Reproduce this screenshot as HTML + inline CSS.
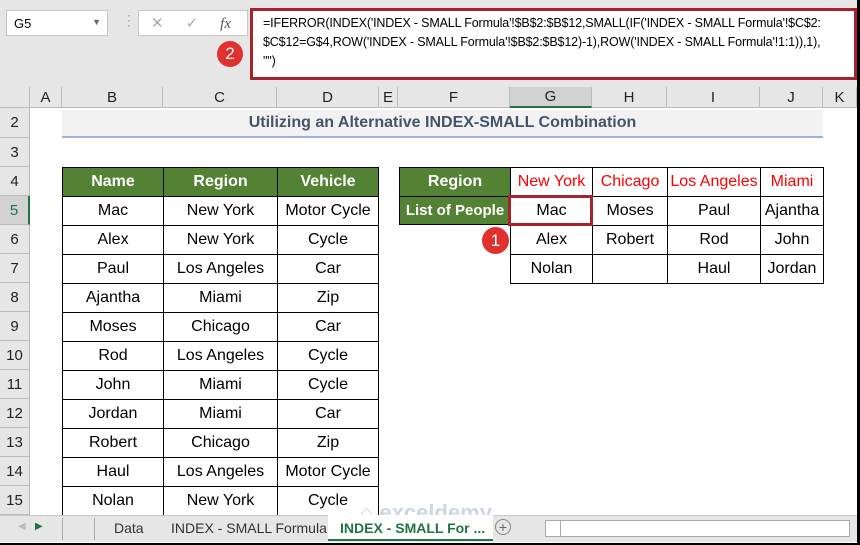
<!DOCTYPE html><html><head><style>
body{margin:0;width:860px;height:545px;overflow:hidden;background:#000;font-family:"Liberation Sans",sans-serif;position:relative}
.a{position:absolute;box-sizing:border-box}
.c{position:absolute;box-sizing:border-box;display:flex;align-items:center;justify-content:center;font-size:16px;color:#000}
.hd{position:absolute;box-sizing:border-box;display:flex;align-items:center;justify-content:center;font-size:15px;color:#222;background:#e6e6e6;border-right:1px solid #bbb;border-bottom:1px solid #bbb}
.g{background:#548235;color:#fff;font-weight:bold}
.r{color:#f00}
.bt{border:1px solid #000}
</style></head><body>
<div class="a" style="left:0;top:0;width:857px;height:543px;background:#fff"></div>
<div class="a" style="left:0;top:0;width:857px;height:87px;background:#e6e6e6"></div>
<div class="a" style="left:6px;top:10px;width:102px;height:26px;background:#fff;border:1px solid #c6c6c6;font-size:13px;padding:5px 0 0 7px">G5<span style="position:absolute;right:6px;top:6px;font-size:9px;color:#666">▼</span></div>
<div class="a" style="left:122px;top:12px;color:#aaa;font-size:14px">⋮</div>
<div class="a" style="left:138px;top:10px;width:110px;height:26px;background:#fff;border:1px solid #c6c6c6;font-size:15px;color:#aaa;padding-top:3px"><span style="margin-left:12px">✕</span><span style="margin-left:22px">✓</span><span style="margin-left:22px;font-family:'Liberation Serif';font-style:italic;color:#555">fx</span></div>
<div class="a" style="left:250px;top:8px;width:607px;height:72px;background:#fff;border:3px solid #a5232a;font-size:12.5px;letter-spacing:-0.15px;line-height:19px;padding:3px 0 0 10px;white-space:pre;overflow:hidden">=IFERROR(INDEX('INDEX - SMALL Formula'!$B$2:$B$12,SMALL(IF('INDEX - SMALL Formula'!$C$2:
$C$12=G$4,ROW('INDEX - SMALL Formula'!$B$2:$B$12)-1),ROW('INDEX - SMALL Formula'!1:1)),1),
"")</div>
<div class="a" style="left:217px;top:41px;width:26px;height:26px;border-radius:50%;background:#e0312f;color:#fff;font-size:17px;text-align:center;line-height:26px">2</div>
<div class="hd" style="left:0;top:87px;width:30px;height:21px"></div>
<div class="hd" style="left:30px;top:87px;width:32px;height:21px">A</div>
<div class="hd" style="left:62px;top:87px;width:101px;height:21px">B</div>
<div class="hd" style="left:163px;top:87px;width:114px;height:21px">C</div>
<div class="hd" style="left:277px;top:87px;width:102px;height:21px">D</div>
<div class="hd" style="left:379px;top:87px;width:19px;height:21px">E</div>
<div class="hd" style="left:398px;top:87px;width:112px;height:21px">F</div>
<div class="hd" style="left:510px;top:87px;width:82px;height:21px;background:#d2d2d2;border-bottom:2px solid #217346">G</div>
<div class="hd" style="left:592px;top:87px;width:75px;height:21px">H</div>
<div class="hd" style="left:667px;top:87px;width:93px;height:21px">I</div>
<div class="hd" style="left:760px;top:87px;width:63px;height:21px">J</div>
<div class="hd" style="left:823px;top:87px;width:34px;height:21px">K</div>
<div class="hd" style="left:0;top:108px;width:30px;height:30px">2</div>
<div class="hd" style="left:0;top:138px;width:30px;height:29px">3</div>
<div class="hd" style="left:0;top:167px;width:30px;height:29px">4</div>
<div class="hd" style="left:0;top:196px;width:30px;height:29px;background:#d2d2d2;color:#217346;border-right:2px solid #217346">5</div>
<div class="hd" style="left:0;top:225px;width:30px;height:29px">6</div>
<div class="hd" style="left:0;top:254px;width:30px;height:29px">7</div>
<div class="hd" style="left:0;top:283px;width:30px;height:29px">8</div>
<div class="hd" style="left:0;top:312px;width:30px;height:29px">9</div>
<div class="hd" style="left:0;top:341px;width:30px;height:29px">10</div>
<div class="hd" style="left:0;top:370px;width:30px;height:29px">11</div>
<div class="hd" style="left:0;top:399px;width:30px;height:29px">12</div>
<div class="hd" style="left:0;top:428px;width:30px;height:29px">13</div>
<div class="hd" style="left:0;top:457px;width:30px;height:29px">14</div>
<div class="hd" style="left:0;top:486px;width:30px;height:29px">15</div>
<div class="c" style="left:62px;top:110px;width:761px;height:28px;background:#f2f2f2;border-bottom:2px solid #9db3e0;color:#44546a;font-weight:bold;font-size:16px">Utilizing an Alternative INDEX-SMALL Combination</div>
<div class="c g bt" style="left:62px;top:167px;width:102px;height:30px">Name</div>
<div class="c g bt" style="left:163px;top:167px;width:115px;height:30px">Region</div>
<div class="c g bt" style="left:277px;top:167px;width:102px;height:30px">Vehicle</div>
<div class="c bt" style="left:62px;top:196px;width:102px;height:30px">Mac</div><div class="c bt" style="left:163px;top:196px;width:115px;height:30px">New York</div><div class="c bt" style="left:277px;top:196px;width:102px;height:30px">Motor Cycle</div>
<div class="c bt" style="left:62px;top:225px;width:102px;height:30px">Alex</div><div class="c bt" style="left:163px;top:225px;width:115px;height:30px">New York</div><div class="c bt" style="left:277px;top:225px;width:102px;height:30px">Cycle</div>
<div class="c bt" style="left:62px;top:254px;width:102px;height:30px">Paul</div><div class="c bt" style="left:163px;top:254px;width:115px;height:30px">Los Angeles</div><div class="c bt" style="left:277px;top:254px;width:102px;height:30px">Car</div>
<div class="c bt" style="left:62px;top:283px;width:102px;height:30px">Ajantha</div><div class="c bt" style="left:163px;top:283px;width:115px;height:30px">Miami</div><div class="c bt" style="left:277px;top:283px;width:102px;height:30px">Zip</div>
<div class="c bt" style="left:62px;top:312px;width:102px;height:30px">Moses</div><div class="c bt" style="left:163px;top:312px;width:115px;height:30px">Chicago</div><div class="c bt" style="left:277px;top:312px;width:102px;height:30px">Car</div>
<div class="c bt" style="left:62px;top:341px;width:102px;height:30px">Rod</div><div class="c bt" style="left:163px;top:341px;width:115px;height:30px">Los Angeles</div><div class="c bt" style="left:277px;top:341px;width:102px;height:30px">Cycle</div>
<div class="c bt" style="left:62px;top:370px;width:102px;height:30px">John</div><div class="c bt" style="left:163px;top:370px;width:115px;height:30px">Miami</div><div class="c bt" style="left:277px;top:370px;width:102px;height:30px">Cycle</div>
<div class="c bt" style="left:62px;top:399px;width:102px;height:30px">Jordan</div><div class="c bt" style="left:163px;top:399px;width:115px;height:30px">Miami</div><div class="c bt" style="left:277px;top:399px;width:102px;height:30px">Car</div>
<div class="c bt" style="left:62px;top:428px;width:102px;height:30px">Robert</div><div class="c bt" style="left:163px;top:428px;width:115px;height:30px">Chicago</div><div class="c bt" style="left:277px;top:428px;width:102px;height:30px">Zip</div>
<div class="c bt" style="left:62px;top:457px;width:102px;height:30px">Haul</div><div class="c bt" style="left:163px;top:457px;width:115px;height:30px">Los Angeles</div><div class="c bt" style="left:277px;top:457px;width:102px;height:30px">Motor Cycle</div>
<div class="c bt" style="left:62px;top:486px;width:102px;height:30px">Nolan</div><div class="c bt" style="left:163px;top:486px;width:115px;height:30px">New York</div><div class="c bt" style="left:277px;top:486px;width:102px;height:30px">Cycle</div>

<div class="c g bt" style="left:399px;top:167px;width:112px;height:30px">Region</div>
<div class="c g bt" style="left:399px;top:196px;width:112px;height:29px;font-size:15px">List of People</div>
<div class="c bt r" style="left:510px;top:167px;width:83px;height:30px">New York</div>
<div class="c bt r" style="left:592px;top:167px;width:76px;height:30px">Chicago</div>
<div class="c bt r" style="left:667px;top:167px;width:94px;height:30px">Los Angeles</div>
<div class="c bt r" style="left:760px;top:167px;width:64px;height:30px">Miami</div>
<div class="c bt" style="left:510px;top:196px;width:83px;height:30px">Mac</div><div class="c bt" style="left:592px;top:196px;width:76px;height:30px">Moses</div><div class="c bt" style="left:667px;top:196px;width:94px;height:30px">Paul</div><div class="c bt" style="left:760px;top:196px;width:64px;height:30px">Ajantha</div>
<div class="c bt" style="left:510px;top:225px;width:83px;height:30px">Alex</div><div class="c bt" style="left:592px;top:225px;width:76px;height:30px">Robert</div><div class="c bt" style="left:667px;top:225px;width:94px;height:30px">Rod</div><div class="c bt" style="left:760px;top:225px;width:64px;height:30px">John</div>
<div class="c bt" style="left:510px;top:254px;width:83px;height:30px">Nolan</div><div class="c bt" style="left:592px;top:254px;width:76px;height:30px"></div><div class="c bt" style="left:667px;top:254px;width:94px;height:30px">Haul</div><div class="c bt" style="left:760px;top:254px;width:64px;height:30px">Jordan</div>
<div class="a" style="left:508px;top:195px;width:85px;height:31px;border:3px solid #a5232a"></div>
<div class="a" style="left:482px;top:227px;width:27px;height:27px;border-radius:50%;background:#e0312f;color:#fff;font-size:17px;text-align:center;line-height:27px">1</div>
<div class="a" style="left:360px;top:500px;color:#b8c4dc;font-size:22px;font-weight:bold;opacity:.7">⌂ exceldemy</div>
<div class="a" style="left:0;top:515px;width:857px;height:27px;background:#e6e6e6;border-top:1px solid #c6c6c6;font-size:14px;color:#333"></div>
<div class="a" style="left:18px;top:521px;font-size:10px;color:#bbb">◀</div>
<div class="a" style="left:35px;top:521px;font-size:10px;color:#217346">▶</div>
<div class="a" style="left:62px;top:518px;width:1px;height:22px;background:#aaa"></div>
<div class="a" style="left:114px;top:520px;font-size:14px;color:#333">Data</div>
<div class="a" style="left:94px;top:518px;width:1px;height:22px;background:#aaa"></div>
<div class="a" style="left:171px;top:520px;font-size:14px;color:#333">INDEX - SMALL Formula</div>
<div class="a" style="left:328px;top:515px;width:165px;height:26px;background:#fff;border-bottom:2px solid #217346;font-size:14px;color:#217346;font-weight:bold;padding:5px 0 0 12px">INDEX - SMALL For ...</div>
<div class="a" style="left:495px;top:519px;width:16px;height:16px;border:1px solid #888;border-radius:50%;font-size:14px;color:#666;text-align:center;line-height:15px">+</div>
<div class="a" style="left:545px;top:520px;width:305px;height:17px;background:#fff;border:1px solid #aaa"></div>
<div class="a" style="left:560px;top:520px;width:1px;height:17px;background:#aaa"></div>
</body></html>
